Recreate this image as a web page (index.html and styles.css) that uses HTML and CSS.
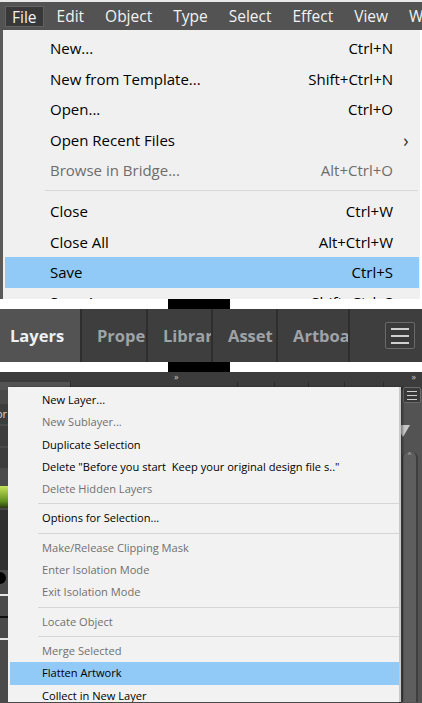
FILE: index.html
```html
<!DOCTYPE html>
<html lang="en">
<head>
  <meta charset="UTF-8">
  <meta name="viewport" content="width=device-width, initial-scale=1.0">
  <title>Flatten Artwork</title>
  <link rel="stylesheet" href="styles.css">
</head>
<body>
  <div class="file-shot">
    <div class="menubar">
      <span class="mb-item active">File</span>
      <span class="mb-item">Edit</span>
      <span class="mb-item">Object</span>
      <span class="mb-item">Type</span>
      <span class="mb-item">Select</span>
      <span class="mb-item">Effect</span>
      <span class="mb-item">View</span>
      <span class="mb-item">Window</span>
    </div>
    <div class="dropdown">
      <div class="mi"><span>New...</span><span class="key">Ctrl+N</span></div>
      <div class="mi"><span>New from Template...</span><span class="key">Shift+Ctrl+N</span></div>
      <div class="mi"><span>Open...</span><span class="key">Ctrl+O</span></div>
      <div class="mi"><span>Open Recent Files</span><span class="key"></span><span class="arrow">&#x203A;</span></div>
      <div class="mi off"><span>Browse in Bridge...</span><span class="key">Alt+Ctrl+O</span></div>
      <div class="sep"></div>
      <div class="mi"><span>Close</span><span class="key">Ctrl+W</span></div>
      <div class="mi"><span>Close All</span><span class="key">Alt+Ctrl+W</span></div>
      <div class="mi hi"><span>Save</span><span class="key">Ctrl+S</span></div>
      <div class="mi cut"><span>Save As...</span><span class="key">Shift+Ctrl+S</span></div>
    </div>
  </div>

  <div class="gap"><div class="blk"></div></div>

  <div class="tabbar">
    <div class="tab active">Layers</div>
    <div class="tab">Properties</div>
    <div class="tab">Libraries</div>
    <div class="tab">Asset</div>
    <div class="tab">Artboards</div>
    <div class="tab-rest">
      <div class="burger big"><i></i><i></i><i></i></div>
    </div>
  </div>

  <div class="gap"><div class="blk"></div></div>

  <div class="layers-shot">
    <div class="ph"><span>&#xBB;</span><span>&#xBB;</span></div>
    <div class="ptabs">
      <div class="pt first"></div>
      <div class="pt w167"></div>
      <div class="pt w37"></div>
      <div class="pt w34"></div>
      <div class="pt w36"></div>
      <div class="pt w39"></div>
      <div class="pt last"></div>
    </div>
    <div class="pbody">
      <div class="pleft">
        <div class="lrow">or</div>
        <div class="lrow"></div>
        <div class="lrow"></div>
        <div class="swatch"></div>
        <div class="lrow dark"></div>
        <div class="dot"></div>
        <div class="lines"><i></i><i></i><i></i></div>
      </div>
      <div class="pmid"></div>
      <div class="pright">
        <div class="funnel"></div>
        <div class="scroll"><span>&#x2C4;</span></div>
      </div>
    </div>
    <div class="pbtn"><div class="burger"><i></i><i></i><i></i></div></div>

    <div class="popup">
      <div class="pi">New Layer...</div>
      <div class="pi off">New Sublayer...</div>
      <div class="pi">Duplicate Selection</div>
      <div class="pi">Delete "Before you start&nbsp; Keep your original design file s.."</div>
      <div class="pi off">Delete Hidden Layers</div>
      <div class="psep"></div>
      <div class="pi">Options for Selection...</div>
      <div class="psep"></div>
      <div class="pi off">Make/Release Clipping Mask</div>
      <div class="pi off">Enter Isolation Mode</div>
      <div class="pi off">Exit Isolation Mode</div>
      <div class="psep"></div>
      <div class="pi off">Locate Object</div>
      <div class="psep"></div>
      <div class="pi off">Merge Selected</div>
      <div class="pi hi">Flatten Artwork</div>
      <div class="pi">Collect in New Layer</div>
    </div>
  </div>
</body>
</html>
```

FILE: styles.css
```css
body {
  margin: 0;
  width: 422px;
  height: 703px;
  overflow: hidden;
  background: #fff;
  font-family: 'Open Sans', 'Noto Sans', sans-serif;
}

/* top shot: file menu */
.file-shot {
  height: 299px;
  overflow: hidden;
}
.menubar {
  height: 28px;
  border-top: 2px solid #e9e9e9;
  background: #535353;
  display: flex;
  align-items: center;
  gap: 7px;
  padding-left: 5px;
  white-space: nowrap;
  overflow: hidden;
}
.mb-item {
  padding: 0 7px;
  height: 21px;
  line-height: 20px;
  font-size: 15.5px;
  color: #f2f2f2;
  box-sizing: border-box;
}
.mb-item.active {
  background: #383838;
  border: 1px solid #626262;
  padding: 0 6px;
  margin-right: -1px;
}
.dropdown {
  margin-right: 2px;
  border-left: 3px solid #5a5a5a;
  background: #f0f0f0;
  padding-top: 3px;
  height: 270px;
  box-sizing: border-box;
}
.mi {
  display: grid;
  grid-template-columns: 1fr auto 26px;
  align-items: center;
  height: 30.5px;
  padding-left: 45px;
  margin: 0 1px 0 2px;
  font-size: 15px;
  color: #000;
}
.mi .key {
  text-align: right;
}
.mi .arrow {
  text-align: center;
  font-size: 18px;
  color: #333;
}
.mi.off {
  color: #6d6d6d;
}
.mi.hi {
  background: #91c9f7;
}
.mi.cut {
  align-items: start;
  padding-top: 4px;
  box-sizing: border-box;
}
.sep {
  height: 10.5px;
  margin-left: 42px;
  margin-right: 2px;
  display: flex;
  align-items: center;
}
.sep::after {
  content: "";
  flex: 1;
  height: 1px;
  background: #d7d7d7;
}

/* white strips with the black chunk */
.gap {
  height: 10px;
  background: #fff;
}
.blk {
  margin-left: 168px;
  width: 62px;
  height: 10px;
  background: #000;
}

/* middle shot: panel tabs */
.tabbar {
  height: 53px;
  background: #2e2e2e;
  display: flex;
  gap: 2px;
}
.tab {
  width: 64px;
  padding-left: 15px;
  box-sizing: border-box;
  background: #3e3e3e;
  color: #9fa3a8;
  font-size: 16.5px;
  font-weight: bold;
  line-height: 53px;
  white-space: nowrap;
  overflow: hidden;
}
.tab.active {
  width: 80px;
  padding-left: 10px;
  background: #535353;
  color: #eef0f3;
}
.tab:nth-child(2) { width: 64px; }
.tab:nth-child(3) { width: 63px; }
.tab:nth-child(4) { width: 63px; }
.tab:nth-child(5) { width: 70px; }
.tab-rest {
  flex: 1;
  background: #3e3e3e;
  display: flex;
  align-items: center;
  justify-content: flex-end;
  padding-right: 7px;
}
.burger {
  display: flex;
  flex-direction: column;
  justify-content: center;
  gap: 3px;
  box-sizing: border-box;
  border: 1px solid #6a6a6a;
  border-radius: 2px;
  background: #3a3a3a;
}
.burger i {
  display: block;
  height: 1px;
  background: #d0d0d0;
}
.burger.big {
  width: 30px;
  height: 27px;
  padding: 0 5px;
  gap: 5px;
}
.burger.big i {
  height: 2px;
}

/* bottom shot: layers panel with flyout */
.layers-shot {
  position: relative;
  height: 331px;
  background: #535353;
}
.ph {
  height: 10px;
  background: #3c3c3c;
  display: flex;
  justify-content: space-between;
  padding: 0 6px 0 174px;
  font-size: 9px;
  line-height: 9px;
  color: #c8c8c8;
}
.ptabs {
  height: 8px;
  display: flex;
  gap: 1px;
  background: #2b2b2b;
}
.pt {
  background: #3c3c3c;
}
.pt.first { width: 70px; background: #535353; }
.w167 { width: 166px; }
.w37 { width: 36px; }
.w34 { width: 33px; }
.w36 { width: 35px; }
.w39 { width: 38px; }
.pt.last { flex: 1; }
.pbody {
  display: flex;
  height: 313px;
}
.pleft {
  width: 10px;
  background: #4a4a4a;
  display: flex;
  flex-direction: column;
  gap: 2px;
  padding-top: 14px;
  font-size: 11px;
  color: #d8d8d8;
}
.lrow {
  height: 20px;
  line-height: 20px;
  background: #3d3d3d;
  text-indent: -4px;
  overflow: hidden;
}
.lrow.dark {
  height: 60px;
  background: #2f2f2f;
}
.swatch {
  height: 22px;
  margin-top: 16px;
  background: linear-gradient(to bottom, #c6e25a, #5f8f1f 70%, #2b3a12);
}
.dot {
  width: 12px;
  height: 12px;
  margin-left: -6px;
  border-radius: 50%;
  background: #000;
}
.lines {
  display: flex;
  flex-direction: column;
  gap: 20px;
  padding-top: 8px;
}
.lines i {
  display: block;
  height: 2px;
  background: #e6e6e6;
}
.lines i:nth-child(2) {
  background: #111;
}
.pmid {
  flex: 1;
}
.pright {
  width: 21px;
  background: #535353;
  border-left: 2px solid #2f2f2f;
}
.funnel {
  margin: 35px 0 0 -5px;
  width: 0;
  height: 0;
  border-left: 7px solid transparent;
  border-right: 7px solid transparent;
  border-top: 12px solid #c8c8c8;
}
.scroll {
  margin: 15px 4px 0 1px;
  height: 250px;
  background: #5e5e5e;
  border-left: 1px solid #3e3e3e;
  border-right: 2px solid #3e3e3e;
  border-radius: 6px 6px 0 0;
  text-align: center;
  color: #d0d0d0;
  font-size: 12px;
  line-height: 12px;
}
.pbtn {
  position: absolute;
  top: 15px;
  right: 1px;
}
.pbtn .burger {
  width: 18px;
  height: 16px;
  padding: 0 3px;
}
.popup {
  position: absolute;
  left: 8px;
  top: 15px;
  width: 393px;
  height: 315px;
  background: #f2f2f2;
  border-right: 2px solid #c9c9c9;
  box-shadow: 2px 0 2px rgba(0, 0, 0, 0.35);
  padding-top: 2px;
  box-sizing: border-box;
  overflow: hidden;
}
.pi {
  height: 22.3px;
  line-height: 22.3px;
  padding-left: 32px;
  margin-left: 2px;
  font-size: 11.1px;
  color: #000;
  white-space: nowrap;
}
.pi.off {
  color: #707070;
}
.pi.hi {
  background: #91c9f7;
}
.psep {
  height: 7px;
  margin-left: 30px;
  display: flex;
  align-items: center;
}
.psep::after {
  content: "";
  flex: 1;
  height: 1px;
  background: #d6d6d6;
}
```
